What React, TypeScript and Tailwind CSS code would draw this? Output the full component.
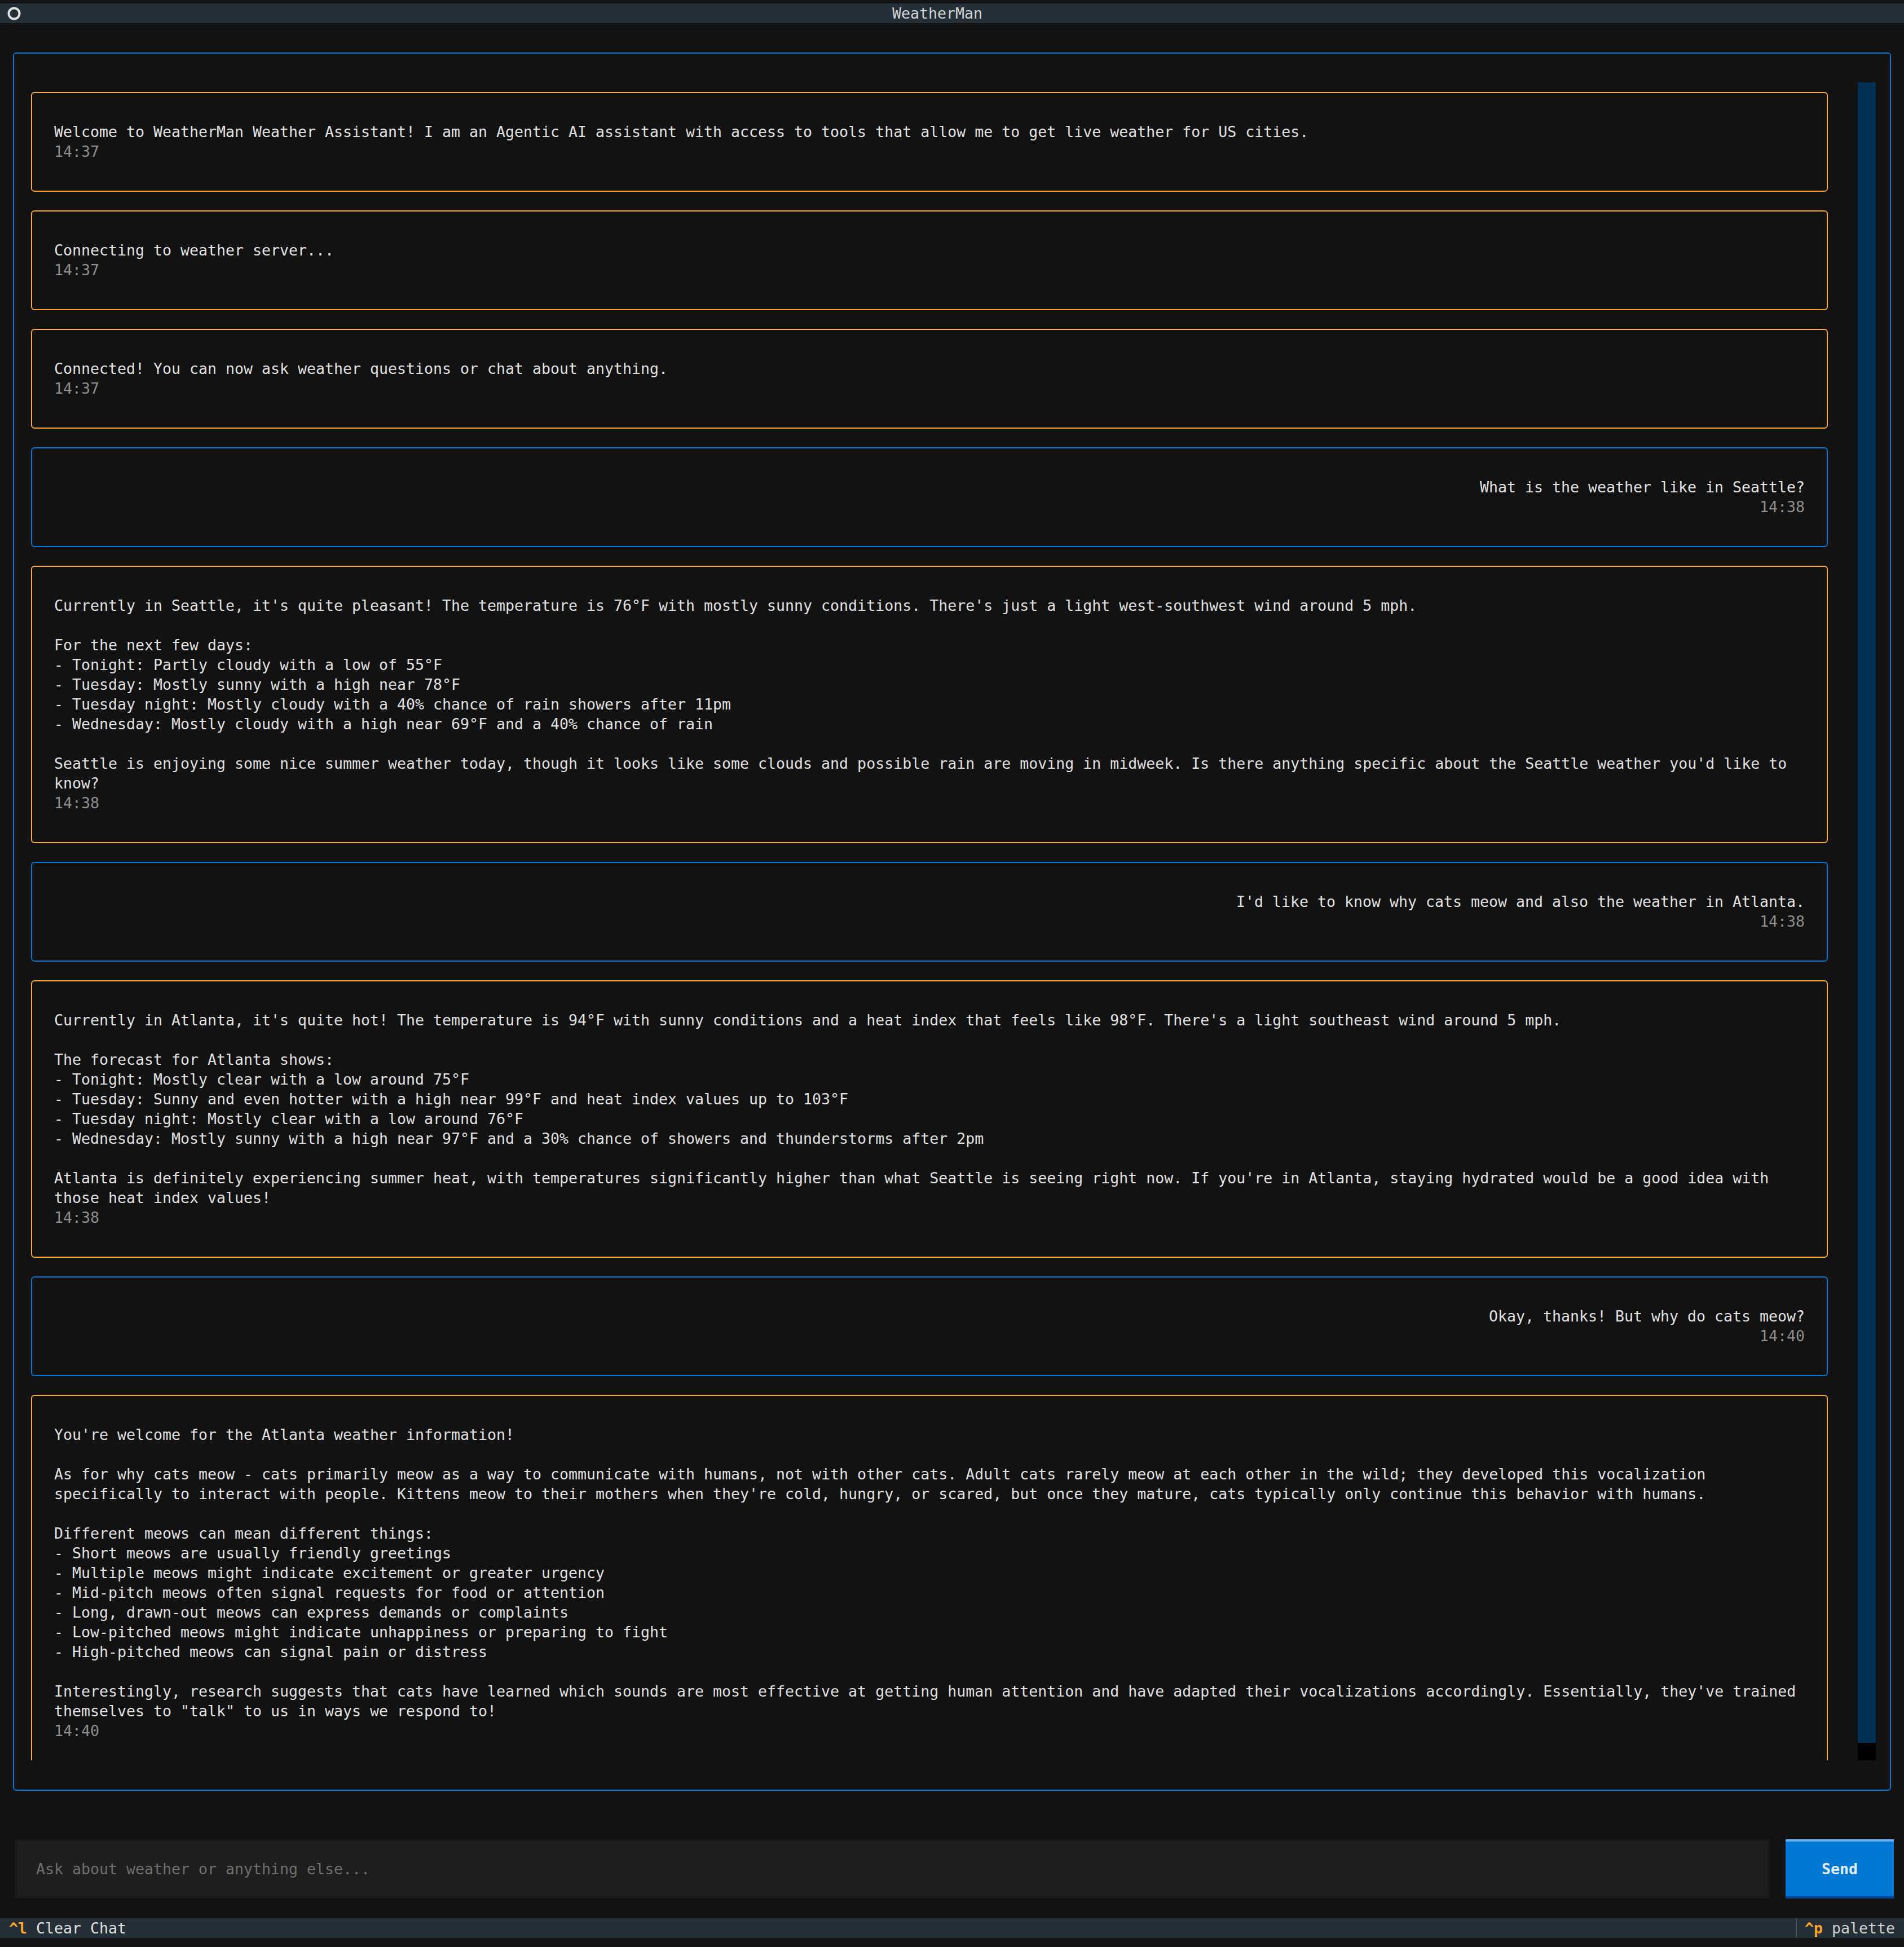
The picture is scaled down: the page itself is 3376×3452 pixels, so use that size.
import React from 'react';

type Msg = {
  from: 'bot' | 'user';
  lines: string[];
  time: string;
};

const messages: Msg[] = [
  {
    from: 'bot',
    lines: [
      'Welcome to WeatherMan Weather Assistant! I am an Agentic AI assistant with access to tools that allow me to get live weather for US cities.',
    ],
    time: '14:37',
  },
  { from: 'bot', lines: ['Connecting to weather server...'], time: '14:37' },
  {
    from: 'bot',
    lines: ['Connected! You can now ask weather questions or chat about anything.'],
    time: '14:37',
  },
  { from: 'user', lines: ['What is the weather like in Seattle?'], time: '14:38' },
  {
    from: 'bot',
    lines: [
      "Currently in Seattle, it's quite pleasant! The temperature is 76°F with mostly sunny conditions. There's just a light west-southwest wind around 5 mph.",
      '',
      'For the next few days:',
      '- Tonight: Partly cloudy with a low of 55°F',
      '- Tuesday: Mostly sunny with a high near 78°F',
      '- Tuesday night: Mostly cloudy with a 40% chance of rain showers after 11pm',
      '- Wednesday: Mostly cloudy with a high near 69°F and a 40% chance of rain',
      '',
      "Seattle is enjoying some nice summer weather today, though it looks like some clouds and possible rain are moving in midweek. Is there anything specific about the Seattle weather you'd like to",
      'know?',
    ],
    time: '14:38',
  },
  {
    from: 'user',
    lines: ["I'd like to know why cats meow and also the weather in Atlanta."],
    time: '14:38',
  },
  {
    from: 'bot',
    lines: [
      "Currently in Atlanta, it's quite hot! The temperature is 94°F with sunny conditions and a heat index that feels like 98°F. There's a light southeast wind around 5 mph.",
      '',
      'The forecast for Atlanta shows:',
      '- Tonight: Mostly clear with a low around 75°F',
      '- Tuesday: Sunny and even hotter with a high near 99°F and heat index values up to 103°F',
      '- Tuesday night: Mostly clear with a low around 76°F',
      '- Wednesday: Mostly sunny with a high near 97°F and a 30% chance of showers and thunderstorms after 2pm',
      '',
      "Atlanta is definitely experiencing summer heat, with temperatures significantly higher than what Seattle is seeing right now. If you're in Atlanta, staying hydrated would be a good idea with",
      'those heat index values!',
    ],
    time: '14:38',
  },
  { from: 'user', lines: ['Okay, thanks! But why do cats meow?'], time: '14:40' },
  {
    from: 'bot',
    lines: [
      "You're welcome for the Atlanta weather information!",
      '',
      'As for why cats meow - cats primarily meow as a way to communicate with humans, not with other cats. Adult cats rarely meow at each other in the wild; they developed this vocalization',
      "specifically to interact with people. Kittens meow to their mothers when they're cold, hungry, or scared, but once they mature, cats typically only continue this behavior with humans.",
      '',
      'Different meows can mean different things:',
      '- Short meows are usually friendly greetings',
      '- Multiple meows might indicate excitement or greater urgency',
      '- Mid-pitch meows often signal requests for food or attention',
      '- Long, drawn-out meows can express demands or complaints',
      '- Low-pitched meows might indicate unhappiness or preparing to fight',
      '- High-pitched meows can signal pain or distress',
      '',
      "Interestingly, research suggests that cats have learned which sounds are most effective at getting human attention and have adapted their vocalizations accordingly. Essentially, they've trained",
      'themselves to "talk" to us in ways we respond to!',
    ],
    time: '14:40',
  },
];

const mono = '"DejaVu Sans Mono", "Liberation Mono", monospace';

function Bubble({ msg }: { msg: Msg }) {
  const isUser = msg.from === 'user';
  return (
    <div className="px-[7px] py-[16.5px] shrink-0">
      <div
        className={
          'border-2 rounded-[6px] px-[39px] py-[51.5px] ' +
          (isUser ? 'border-[#0178d4] text-right' : 'border-[#ffa62b] text-left')
        }
      >
        {msg.lines.map((l, i) => (
          <div key={i} className="h-[35px] whitespace-pre text-[#e0e0e0]">
            {l === '' ? ' ' : l}
          </div>
        ))}
        <div className="h-[35px] whitespace-pre text-[#8e8e8e]">{msg.time}</div>
      </div>
    </div>
  );
}

export default function App() {
  return (
    <div
      className="w-[3376px] h-[3452px] overflow-hidden bg-[#161416] pt-[6px] text-[26.58px] leading-[35px] text-[#e0e0e0]"
      style={{ fontFamily: mono }}
    >
      <div className="h-[3430px] bg-[#121212] flex flex-col">
        {/* header */}
        <div className="h-[35px] shrink-0 bg-[#242f38] flex items-center">
          <div className="w-[24px] ml-[13px] h-[35px] flex items-center justify-center">
            <svg width="24" height="24" viewBox="0 0 24 24">
              <circle cx="12" cy="12" r="9.5" fill="none" stroke="#e0e0e0" strokeWidth="4" />
            </svg>
          </div>
          <span className="ml-[1545px] text-[#d4d4d4]">WeatherMan</span>
        </div>

        <div className="h-[35px] shrink-0" />

        {/* chat area */}
        <div className="h-[3115px] shrink-0 px-[16px]">
          <div className="h-full px-[7px] py-[16.5px]">
            <div className="h-full border-2 border-[#0178d4] rounded-[6px] px-[23px] py-[51.5px]">
              <div className="h-[2975px] flex overflow-hidden">
                <div className="w-[3200px] h-full flex flex-col overflow-hidden shrink-0">
                  {messages.map((m, i) => (
                    <Bubble key={i} msg={m} />
                  ))}
                </div>
                <div className="ml-[46px] w-[32px] h-full flex flex-col shrink-0">
                  <div className="h-[2944px] bg-[#003054]" />
                  <div className="flex-1 bg-black" />
                </div>
              </div>
            </div>
          </div>
        </div>

        <div className="h-[70px] shrink-0" />

        {/* input row */}
        <div className="h-[105px] shrink-0 flex">
          <div className="ml-[26px] w-[3112px] h-[105px] bg-[#1e1e1e] border-4 border-[#1a1a1a] flex items-center">
            <input
              className="w-full bg-transparent outline-none pl-[34px] text-[26.58px] text-[#e0e0e0] placeholder:text-[#6e6e6e]"
              style={{ fontFamily: mono }}
              placeholder="Ask about weather or anything else..."
            />
          </div>
          <div className="ml-[28px] w-[192px] h-[105px] bg-[#0178d4] border-t-4 border-b-4 border-t-[#6aaef5] border-b-[#00489a] flex items-center justify-center">
            <span className="font-bold text-[#e3eefa]">Send</span>
          </div>
        </div>

        <div className="h-[35px] shrink-0" />

        {/* footer */}
        <div className="h-[35px] shrink-0 bg-[#242f38] flex items-center">
          <span className="pl-[16px] font-bold text-[#ffa62b] whitespace-pre">^l</span>
          <span className="whitespace-pre text-[#e0e0e0]"> Clear Chat</span>
          <div className="ml-auto h-[35px] w-[2px] bg-[#4a5561]" />
          <span className="ml-[14px] font-bold text-[#ffa62b] whitespace-pre">^p</span>
          <span className="whitespace-pre text-[#d0d0d0] pr-[16px]"> palette</span>
        </div>
      </div>
    </div>
  );
}
